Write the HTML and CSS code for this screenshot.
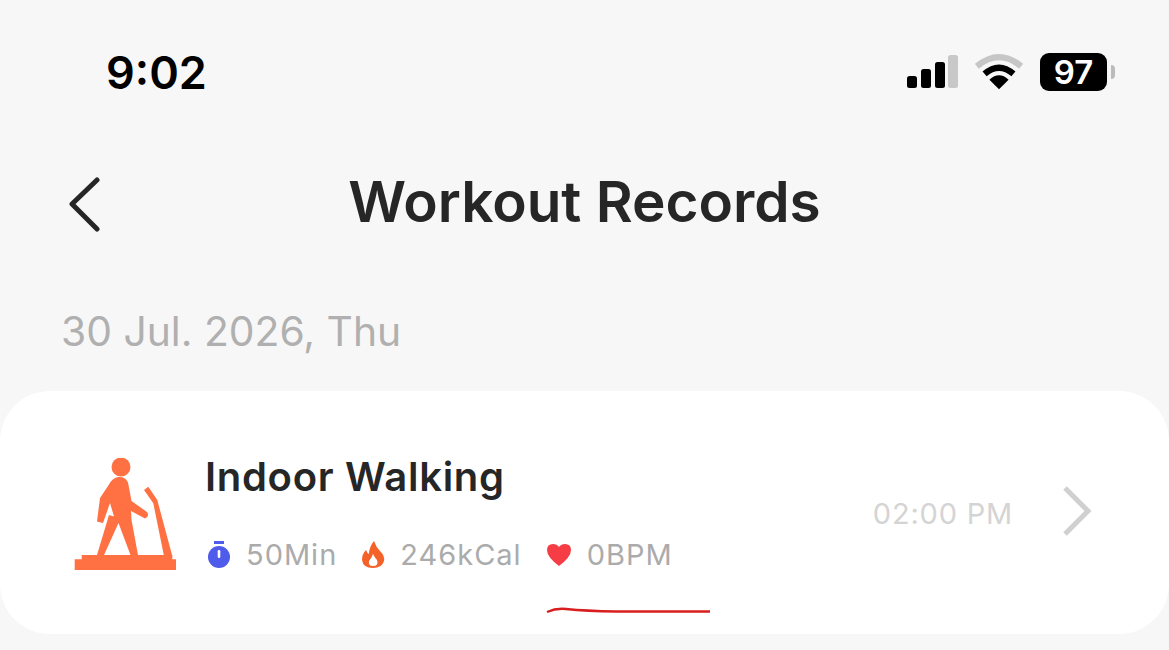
FILE: index.html
```html
<!DOCTYPE html>
<html lang="en">
<head>
    <meta charset="UTF-8">
    <meta name="viewport" content="width=device-width, initial-scale=1.0">
    <title>Workout Records</title>
    <link rel="stylesheet" href="styles.css">
</head>
<body>
    <div class="status-bar">
        <span class="clock">9:02</span>
        <div class="status-icons">
            <svg class="signal" width="52" height="36" viewBox="0 0 52 36">
                <rect x="1" y="22" width="10" height="12" rx="2.5" fill="#000"/>
                <rect x="15" y="15" width="10" height="19" rx="2.5" fill="#000"/>
                <rect x="29" y="8" width="10" height="26" rx="2.5" fill="#000"/>
                <rect x="42" y="1" width="10" height="33" rx="2.5" fill="#c8c8c8"/>
            </svg>
            <svg class="wifi" width="48" height="38" viewBox="0 0 50 38">
                <path d="M2 13 Q25 -6 48 13" fill="none" stroke="#c6c6c6" stroke-width="6.5"/>
                <path d="M10 21 Q25 8 40 21" fill="none" stroke="#000" stroke-width="6.5"/>
                <path d="M15 27 Q25 18 35 27 L25 37 Z" fill="#000"/>
            </svg>
            <div class="battery">
                <span class="battery-body">97</span>
                <span class="battery-cap"></span>
            </div>
        </div>
    </div>

    <header class="nav">
        <svg class="back" width="34" height="58" viewBox="0 0 34 58">
            <path d="M30 6 L5 30 L30 55" fill="none" stroke="#262626" stroke-width="5" stroke-linecap="round" stroke-linejoin="round"/>
        </svg>
        <h1>Workout Records</h1>
    </header>

    <div class="date">30 Jul. 2026, Thu</div>

    <section class="card">
        <svg class="sport-icon" width="104" height="114" viewBox="0 0 104 114">
            <g fill="#ff7043">
                <circle cx="47" cy="9" r="9.500"/>
                <path d="M44 19 Q53 18 54.500 27 L57.500 43 L73 54 Q76 58 71 60.500 L57 53 Q57 62 59 70 L64 97 L56.500 97 L44.500 65 L30 97 L23 97 L35 57 L40 58.500 L36 45 L29 65 L23 63.500 L26 40 L34 28 Q38 20 44 19 Z"/>
                <path d="M70 32 L74.300 28.700 L83.300 42 L98.300 98 L90 98 L79.300 45.300 Z"/>
                <path d="M7.700 97 H98.300 V101.300 H102 V112 H0.700 V101.300 H7.700 Z"/>
            </g>
        </svg>
        <div class="card-main">
            <div class="card-title">Indoor Walking</div>
            <div class="stats">
                <div class="stat">
                    <svg width="24" height="30" viewBox="0 0 24 30">
                        <rect x="7" y="1" width="10" height="3" fill="#4f5bea"/>
                        <circle cx="12" cy="17" r="11" fill="#4f5bea"/>
                        <rect x="10.700" y="10" width="2.600" height="8" rx="1.200" fill="#fff"/>
                    </svg>
                    <span>50Min</span>
                </div>
                <div class="stat">
                    <svg width="24" height="30" viewBox="0 0 24 30">
                        <path d="M13 1 Q15 7 19 11 Q24 16 23 21 Q21 28 12 28 Q2 28 1 20 Q1 14 5 10 Q6 13 8 14 Q8 7 13 1 Z" fill="#f4622a"/>
                        <path d="M12 14 Q14 18 16 20 Q18 26 12 26 Q7 26 8 21 Q10 19 12 14 Z" fill="#fff"/>
                    </svg>
                    <span>246kCal</span>
                </div>
                <div class="stat">
                    <svg width="26" height="30" viewBox="0 0 26 30">
                        <path d="M13 26 Q1 17 1 10 Q1 4 7 4 Q11 4 13 7 Q15 4 19 4 Q25 4 25 10 Q25 17 13 26 Z" fill="#f63c45"/>
                    </svg>
                    <span>0BPM</span>
                </div>
            </div>
        </div>
        <span class="card-time">02:00 PM</span>
        <svg class="forward" width="32" height="52" viewBox="0 0 32 52">
            <path d="M4 3 L27 26 L4 49" fill="none" stroke="#d0d0d0" stroke-width="5"/>
        </svg>
        <svg class="scribble" width="166" height="10" viewBox="0 0 166 10">
            <path d="M1 7 Q10 3 20 4 Q40 6 70 6.500 L164 6.500" fill="none" stroke="#d81e1e" stroke-width="2.400"/>
        </svg>
    </section>
</body>
</html>
```

FILE: styles.css
```css
* {
    box-sizing: border-box;
}

html, body {
    height: 100%;
}

body {
    margin: 0;
    height: 650px;
    overflow: hidden;
    background-color: #f7f7f7;
    font-family: Inter, "Liberation Sans", sans-serif;
    color: #262626;
}

.status-bar {
    display: flex;
    justify-content: space-between;
    align-items: center;
    height: 144px;
    padding: 0 54px 0 106px;
}

.clock {
    font-size: 45px;
    font-weight: 600;
    color: #000;
}

.status-icons {
    display: flex;
    align-items: center;
    gap: 17px;
}

.battery {
    display: flex;
    align-items: center;
    gap: 4px;
}

.battery-body {
    width: 67px;
    height: 38px;
    background-color: #000;
    border-radius: 9px;
    color: #fff;
    font-size: 33px;
    font-weight: 600;
    line-height: 38px;
    text-align: center;
}

.battery-cap {
    width: 4px;
    height: 14px;
    background-color: #bbb;
    border-radius: 0 4px 4px 0;
}

.nav {
    position: relative;
    display: flex;
    justify-content: center;
    align-items: center;
    height: 116px;
    padding-bottom: 2px;
}

.nav h1 {
    margin: 0;
    font-size: 56.7px;
    font-weight: 600;
}

.back {
    position: absolute;
    left: 67px;
    top: 30px;
}

.date {
    margin-top: 47px;
    padding-left: 61px;
    font-size: 40.8px;
    line-height: 48px;
    color: #b0b0b0;
}

.card {
    position: relative;
    display: flex;
    align-items: center;
    height: 243px;
    margin-top: 36px;
    padding: 0 76px 0 74px;
    background-color: #fff;
    border-radius: 50px;
}

.sport-icon {
    flex-shrink: 0;
    margin-top: 5px;
}

.card-main {
    flex: 1;
    margin-left: 27px;
}

.card-title {
    font-size: 40px;
    font-weight: 600;
    line-height: 48px;
    letter-spacing: 0.7px;
}

.stats {
    display: flex;
    gap: 24px;
    margin-top: 36px;
    margin-left: 2px;
}

.stat {
    display: flex;
    align-items: center;
    gap: 15px;
    font-size: 29px;
    line-height: 36px;
    letter-spacing: 1px;
    color: #ababab;
}

.card-time {
    margin-right: 48px;
    margin-top: 2px;
    font-size: 29px;
    letter-spacing: 0.8px;
    color: #d4d4d4;
}

.forward {
    flex-shrink: 0;
    margin-top: -4px;
}

.scribble {
    position: absolute;
    left: 546px;
    top: 214px;
}
```
